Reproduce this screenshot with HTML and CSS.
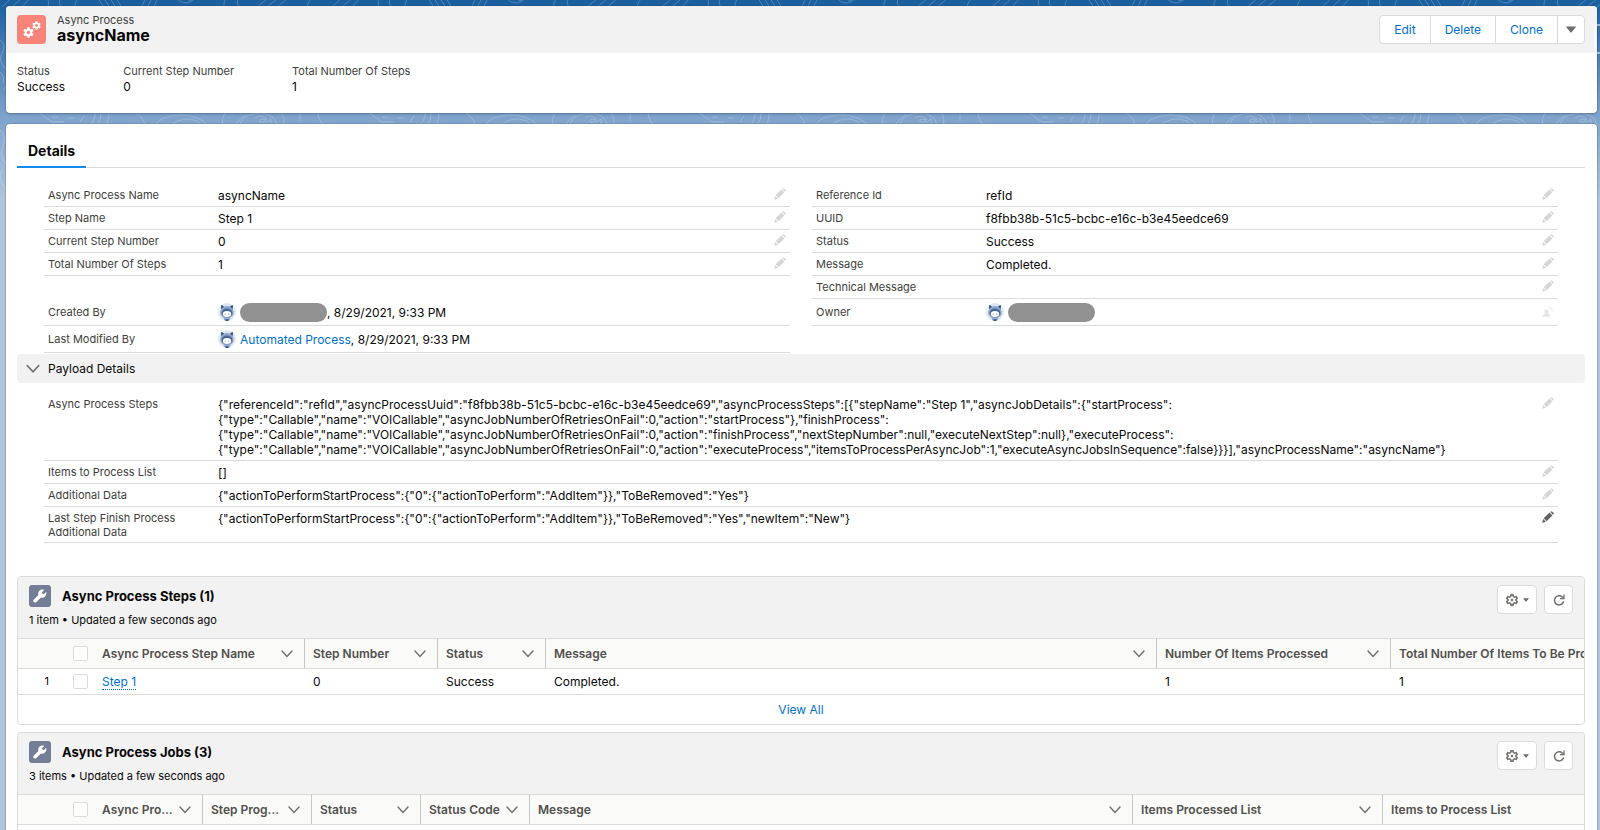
FILE: index.html
```
<!DOCTYPE html>
<html lang="en">
<head>
    <meta charset="UTF-8">
    <meta name="viewport" content="width=device-width, initial-scale=1.0">
    <title>asyncName | Async Process</title>
    <link rel="stylesheet" href="styles.css">
</head>
<body>
    <!-- shared icons -->
    <svg class="sprite" aria-hidden="true">
        <symbol id="pencil" viewBox="0 0 12 12">
            <path d="M1.700 7.300 7.500 1.600l2.900 2.900-5.800 5.700zM8.300 1l.6-.6a.9.9 0 0 1 1.200 0l1.500 1.500a.9.9 0 0 1 0 1.200l-.6.6zM1.200 8.100l2.700 2.700-3 1c-.5.1-.7-.1-.6-.6z"/>
        </symbol>
        <symbol id="chevron" viewBox="0 0 12 12">
            <path d="M1 3l5 5.400L11 3" fill="none" stroke="currentColor" stroke-width="1.400" stroke-linecap="round"/>
        </symbol>
        <symbol id="down" viewBox="0 0 10 7">
            <path d="M.6.5h8.800c.5 0 .6.4.3.8L5.600 6.200c-.3.4-.9.4-1.200 0L.3 1.300C0 .9.1.5.6.5z"/>
        </symbol>
        <symbol id="cog" viewBox="-12 -12 24 24">
            <circle r="6" fill="none" stroke="currentColor" stroke-width="4.500"/>
            <path d="M0-11.500V-7M0 11.500V7M-10-5.800-6-3.500M10 5.800 6 3.500M-10 5.800-6 3.500M10-5.800 6-3.500" stroke="currentColor" stroke-width="5.500" stroke-linejoin="round"/>
        </symbol>
        <symbol id="settings" viewBox="-12 -12 24 24">
            <path d="M-2-10.500h4l.7 3.700 2.300 1.300 3.500-1.300 2 3.500L7.700-.9V.9l2.800 2.400-2 3.500L5 5.500 2.700 6.800 2 10.500h-4l-.7-3.700L-5 5.500l-3.500 1.300-2-3.500L-7.700.9V-.9l-2.800-2.400 2-3.500L-5-5.500l2.300-1.300z" fill="none" stroke="currentColor" stroke-width="3"/>
            <circle r="2.600"/>
        </symbol>
        <symbol id="refresh" viewBox="0 0 12 12">
            <path d="M9.300 3A4.600 4.600 0 1 0 10.400 8" fill="none" stroke="currentColor" stroke-width="1.500" stroke-linecap="round"/>
            <path d="M11.600.4v4.800H6.900V4.100h2.200L10.300 3V.4z"/>
        </symbol>
        <symbol id="wrench" viewBox="0 0 14 14">
            <path d="M13.300 3.300c-.1-.3-.3-.3-.5-.1l-1.900 1.900c-.3.2-.6.2-.8 0L9 4c-.2-.2-.2-.6 0-.8l1.900-1.900c.2-.2.1-.4-.1-.5C9 .2 7 .8 5.900 2.400c-.8 1.100-.9 2.300-.5 3.500L.9 10.400a1.700 1.700 0 0 0 0 2.500 1.700 1.700 0 0 0 2.500 0l4.500-4.500c1.200.4 2.500.3 3.600-.5 1.600-1.100 2.200-3 1.800-4.600z"/>
        </symbol>
        <symbol id="avatar" viewBox="0 0 18 18">
            <circle cx="9" cy="9" r="9" fill="#e1e8f2"/>
            <path d="M3.200 2l3 1.500a7 7 0 0 1 5.600 0l3-1.500v4.200c1.200 2 1.300 5-.2 6.800L12 15H6l-2.600-2c-1.500-1.800-1.400-4.800-.2-6.800z" fill="#8fa6cc"/>
            <path d="M3.200 2l2.600 1.300L4 5.500H3.200zM14.800 2l-2.600 1.300L14 5.500h.8z" fill="#2f4f86"/>
            <ellipse cx="9" cy="9.800" rx="5.400" ry="4.400" fill="#4a6796"/>
            <ellipse cx="9" cy="11" rx="4.200" ry="3" fill="#fff"/>
            <circle cx="7.200" cy="11" r=".6" fill="#5b769f"/>
            <circle cx="10.800" cy="11" r=".6" fill="#5b769f"/>
            <path d="M5.500 15.200h7L11 17.700a9 9 0 0 1-4 0z" fill="#7f9ccb"/>
            <path d="M7.500 16.200h3l-.5 1.700H8z" fill="#2f4f86"/>
        </symbol>
        <symbol id="owner" viewBox="0 0 12 12">
            <path d="M4.500 3.500a2 2 0 0 1 2 2.200c0 1-.5 1.400-.5 1.900 0 .7 2.200.8 2.200 2.200 0 .6-.3.900-.8.900H1.400c-.5 0-.8-.3-.8-.9C.6 8.400 3 8.300 3 7.600c0-.5-.5-.9-.5-1.900a2 2 0 0 1 2-2.200z"/>
            <path d="M6.500 1.500c2.200-.3 3.800 1 3.700 3.500" fill="none" stroke="currentColor"/>
        </symbol>
    </svg>

    <!-- topographic backdrop -->
    <svg class="backdrop" aria-hidden="true">
        <defs>
            <pattern id="topo" width="330" height="200" patternUnits="userSpaceOnUse">
                <g fill="none" stroke="#fff" stroke-opacity=".22">
                    <path d="M2 7 12-2M12 7 22-2M22 7 30-2M48-2q1 5 0 10M60-2q-2 5 1 10M78-2q-4 5-3 10M98-2l6 10M104-2l6 10M110-2l6 10M116-2l6 10M146-2l-5 10M152-2l-5 10M158-2l-5 10M176-2q10 10 20 0M186-2q4 5 8 0M226-2q-3 5-2 10M238-2q-2 5 1 10M268-2l-12 10M278-2l-12 10M288-2l-12 10M312-2q-8 8-2 10"/>
                    <path d="M38 112l14 10h12M52 117h6M68 118h6M84 116l-4 6M95 112q1 6-5 14M101 112q1 6-4 14M109 112q1 6-3 14M132 111q12 5 13 15M155 126q4-10 25-11 20 0 28 11M170 126q12-11 27-5l4 5M226 112q-5 6-3 14M246 115q-8 4-11 12M255 118q5-4 10 0c5 4-6-1-5 3s4-2 7 1l4-3v6l-8-1M240 124q3-10 20-11 14 0 17 12M280 111q6 8 3 14M300 113v8M318 113q1 9 7 13"/>
                    <path d="M0 40q7 5 2 13t5 17-4 20M0 72q5 5 3 11M0 130q7 6 3 16t3 18M2 170q-5 9 3 18"/>
                </g>
            </pattern>
        </defs>
        <rect width="100%" height="100%" fill="url(#topo)"/>
    </svg>
    <span class="edge-tab"></span>

    <header class="card highlights">
        <div class="highlights-top">
            <span class="entity-icon">
                <svg width="11" height="11"><use href="#cog"/></svg>
                <svg width="9" height="9"><use href="#cog"/></svg>
            </span>
            <div class="title">
                <p class="entity">Async Process</p>
                <h1>asyncName</h1>
            </div>
            <div class="button-group">
                <button type="button">Edit</button>
                <button type="button">Delete</button>
                <button type="button">Clone</button>
                <button type="button" class="more" aria-label="More actions"><svg width="10" height="7"><use href="#down"/></svg></button>
            </div>
        </div>
        <dl class="summary">
            <div><dt>Status</dt><dd>Success</dd></div>
            <div><dt>Current Step Number</dt><dd>0</dd></div>
            <div><dt>Total Number Of Steps</dt><dd>1</dd></div>
        </dl>
    </header>

    <main class="card record">
        <nav class="tabs"><a href="#details">Details</a></nav>

        <section id="details" class="details">
            <dl class="fields">
                <div class="field"><dt>Async Process Name</dt><dd>asyncName</dd><button type="button" class="edit" aria-label="Edit Async Process Name"><svg><use href="#pencil"/></svg></button></div>
                <div class="field"><dt>Step Name</dt><dd>Step 1</dd><button type="button" class="edit" aria-label="Edit Step Name"><svg><use href="#pencil"/></svg></button></div>
                <div class="field"><dt>Current Step Number</dt><dd>0</dd><button type="button" class="edit" aria-label="Edit Current Step Number"><svg><use href="#pencil"/></svg></button></div>
                <div class="field"><dt>Total Number Of Steps</dt><dd>1</dd><button type="button" class="edit" aria-label="Edit Total Number Of Steps"><svg><use href="#pencil"/></svg></button></div>
                <div class="field blank"></div>
                <div class="field person"><dt>Created By</dt><dd><svg class="avatar"><use href="#avatar"/></svg><span class="redacted"></span>, 8/29/2021, 9:33 PM</dd></div>
                <div class="field person"><dt>Last Modified By</dt><dd><svg class="avatar"><use href="#avatar"/></svg><a href="#">Automated Process</a>, 8/29/2021, 9:33 PM</dd></div>
            </dl>
            <dl class="fields">
                <div class="field"><dt>Reference Id</dt><dd>refId</dd><button type="button" class="edit" aria-label="Edit Reference Id"><svg><use href="#pencil"/></svg></button></div>
                <div class="field"><dt>UUID</dt><dd>f8fbb38b-51c5-bcbc-e16c-b3e45eedce69</dd><button type="button" class="edit" aria-label="Edit UUID"><svg><use href="#pencil"/></svg></button></div>
                <div class="field"><dt>Status</dt><dd>Success</dd><button type="button" class="edit" aria-label="Edit Status"><svg><use href="#pencil"/></svg></button></div>
                <div class="field"><dt>Message</dt><dd>Completed.</dd><button type="button" class="edit" aria-label="Edit Message"><svg><use href="#pencil"/></svg></button></div>
                <div class="field"><dt>Technical Message</dt><dd></dd><button type="button" class="edit" aria-label="Edit Technical Message"><svg><use href="#pencil"/></svg></button></div>
                <div class="field person"><dt>Owner</dt><dd><svg class="avatar"><use href="#avatar"/></svg><span class="redacted"></span></dd><button type="button" class="edit owner" aria-label="Change Owner"><svg><use href="#owner"/></svg></button></div>
            </dl>
        </section>

        <button type="button" class="section-title"><svg width="14" height="14"><use href="#chevron"/></svg>Payload Details</button>

        <dl class="fields payload">
            <div class="field"><dt>Async Process Steps</dt><dd>{"referenceId":"refId","asyncProcessUuid":"f8fbb38b-51c5-bcbc-e16c-b3e45eedce69","asyncProcessSteps":[{"stepName":"Step 1","asyncJobDetails":{"startProcess":<br>{"type":"Callable","name":"VOICallable","asyncJobNumberOfRetriesOnFail":0,"action":"startProcess"},"finishProcess":<br>{"type":"Callable","name":"VOICallable","asyncJobNumberOfRetriesOnFail":0,"action":"finishProcess","nextStepNumber":null,"executeNextStep":null},"executeProcess":<br>{"type":"Callable","name":"VOICallable","asyncJobNumberOfRetriesOnFail":0,"action":"executeProcess","itemsToProcessPerAsyncJob":1,"executeAsyncJobsInSequence":false}}}],"asyncProcessName":"asyncName"}</dd><button type="button" class="edit" aria-label="Edit Async Process Steps"><svg><use href="#pencil"/></svg></button></div>
            <div class="field"><dt>Items to Process List</dt><dd>[]</dd><button type="button" class="edit" aria-label="Edit Items to Process List"><svg><use href="#pencil"/></svg></button></div>
            <div class="field"><dt>Additional Data</dt><dd>{"actionToPerformStartProcess":{"0":{"actionToPerform":"AddItem"}},"ToBeRemoved":"Yes"}</dd><button type="button" class="edit" aria-label="Edit Additional Data"><svg><use href="#pencil"/></svg></button></div>
            <div class="field"><dt>Last Step Finish Process Additional Data</dt><dd>{"actionToPerformStartProcess":{"0":{"actionToPerform":"AddItem"}},"ToBeRemoved":"Yes","newItem":"New"}</dd><button type="button" class="edit active" aria-label="Edit Last Step Finish Process Additional Data"><svg><use href="#pencil"/></svg></button></div>
        </dl>

        <section class="related">
            <div class="related-head">
                <div>
                    <h2><span class="list-icon"><svg width="14" height="14"><use href="#wrench"/></svg></span>Async Process Steps (1)</h2>
                    <p>1 item • Updated a few seconds ago</p>
                </div>
                <div class="list-actions">
                    <button type="button" class="settings" aria-label="List settings"><svg width="12" height="12"><use href="#settings"/></svg><svg width="6" height="4"><use href="#down"/></svg></button>
                    <button type="button" aria-label="Refresh"><svg width="12" height="12"><use href="#refresh"/></svg></button>
                </div>
            </div>
            <div class="table-wrap">
                <table class="steps">
                    <colgroup><col class="c-num"><col class="c-check"><col class="c-name"><col class="c-step"><col class="c-status"><col><col class="c-items"><col class="c-total"></colgroup>
                    <thead>
                        <tr>
                            <th></th>
                            <th class="check"><input type="checkbox" aria-label="Select all steps"></th>
                            <th><div><span>Async Process Step Name</span><svg><use href="#chevron"/></svg></div></th>
                            <th><div><span>Step Number</span><svg><use href="#chevron"/></svg></div></th>
                            <th><div><span>Status</span><svg><use href="#chevron"/></svg></div></th>
                            <th><div><span>Message</span><svg><use href="#chevron"/></svg></div></th>
                            <th><div><span>Number Of Items Processed</span><svg><use href="#chevron"/></svg></div></th>
                            <th><div><span>Total Number Of Items To Be Processed</span><svg><use href="#chevron"/></svg></div></th>
                        </tr>
                    </thead>
                    <tbody>
                        <tr>
                            <td class="num">1</td>
                            <td class="check"><input type="checkbox" aria-label="Select Step 1"></td>
                            <td><a href="#" class="row-link">Step 1</a></td>
                            <td>0</td>
                            <td>Success</td>
                            <td>Completed.</td>
                            <td>1</td>
                            <td>1</td>
                        </tr>
                    </tbody>
                </table>
            </div>
            <div class="view-all"><a href="#">View All</a></div>
        </section>

        <section class="related last">
            <div class="related-head">
                <div>
                    <h2><span class="list-icon"><svg width="14" height="14"><use href="#wrench"/></svg></span>Async Process Jobs (3)</h2>
                    <p>3 items • Updated a few seconds ago</p>
                </div>
                <div class="list-actions">
                    <button type="button" class="settings" aria-label="List settings"><svg width="12" height="12"><use href="#settings"/></svg><svg width="6" height="4"><use href="#down"/></svg></button>
                    <button type="button" aria-label="Refresh"><svg width="12" height="12"><use href="#refresh"/></svg></button>
                </div>
            </div>
            <div class="table-wrap">
                <table class="jobs">
                    <colgroup><col class="c-num"><col class="c-check"><col class="c-job"><col class="c-job"><col class="c-job"><col class="c-job"><col><col class="c-processed"><col class="c-list"></colgroup>
                    <thead>
                        <tr>
                            <th></th>
                            <th class="check"><input type="checkbox" aria-label="Select all jobs"></th>
                            <th><div><span>Async Pro...</span><svg><use href="#chevron"/></svg></div></th>
                            <th><div><span>Step Prog...</span><svg><use href="#chevron"/></svg></div></th>
                            <th><div><span>Status</span><svg><use href="#chevron"/></svg></div></th>
                            <th><div><span>Status Code</span><svg><use href="#chevron"/></svg></div></th>
                            <th><div><span>Message</span><svg><use href="#chevron"/></svg></div></th>
                            <th><div><span>Items Processed List</span><svg><use href="#chevron"/></svg></div></th>
                            <th><div><span>Items to Process List</span><svg><use href="#chevron"/></svg></div></th>
                        </tr>
                    </thead>
                </table>
            </div>
        </section>
    </main>
</body>
</html>
```
FILE: styles.css
```
* {
    box-sizing: border-box;
}

body {
    position: relative;
    display: flex;
    flex-direction: column;
    gap: 11px;
    min-height: 100vh;
    margin: 0;
    padding: 6px 3px 0 6px;
    font-family: Inter, "Liberation Sans", sans-serif;
    font-size: 12px;
    line-height: 15px;
    color: #080707;
    background: #b0c4df linear-gradient(#195e9f, #7fa3cc 118px, #b0c4df 200px) no-repeat;
    overflow-x: hidden;
}

h1, h2, p, dl, dd {
    margin: 0;
}

a {
    color: #0070d2;
    text-decoration: none;
}

button {
    padding: 0;
    border: 0;
    background: none;
    font-family: inherit;
    font-size: 12px;
    color: #0070d2;
    cursor: pointer;
}

svg {
    flex: none;
    fill: currentColor;
}

.sprite {
    position: absolute;
    width: 0;
    height: 0;
}

.backdrop {
    position: absolute;
    top: 0;
    left: 0;
    width: 100%;
    height: 200px;
}

.edge-tab {
    position: absolute;
    top: 24px;
    right: -10px;
    width: 16px;
    height: 30px;
    border: 2px solid rgba(255, 255, 255, 0.5);
    border-radius: 4px;
    z-index: 1;
}

.card {
    position: relative;
    background: #fff;
    border-radius: 4px;
    box-shadow: 0 0 0 1px rgba(0, 0, 0, 0.12), 0 2px 2px rgba(0, 0, 0, 0.1);
}

/* Highlights panel */
.highlights-top {
    display: flex;
    align-items: center;
    gap: 11px;
    height: 47px;
    padding: 0 12px 0 11px;
    background: #f2f2f2;
    border-radius: 4px 4px 0 0;
}

.entity-icon {
    display: flex;
    align-items: flex-end;
    justify-content: center;
    width: 29px;
    height: 29px;
    padding-bottom: 6px;
    border-radius: 4px;
    background: #f88379;
    color: #fff;
}

.entity-icon svg + svg {
    align-self: flex-start;
    margin-top: 6px;
    margin-left: -2px;
}

.title {
    flex: 1;
    padding-bottom: 2px;
}

.entity {
    font-size: 11px;
    line-height: 13px;
    color: #3e3e3c;
}

h1 {
    font-size: 16px;
    font-weight: 700;
    line-height: 16px;
}

.button-group {
    display: flex;
    height: 29px;
    border: 1px solid #dddbda;
    border-radius: 4px;
    background: #fff;
}

.button-group button {
    padding: 0 14px;
}

.button-group button + button {
    border-left: 1px solid #dddbda;
}

.button-group .more {
    display: flex;
    align-items: center;
    padding: 0 8px;
    color: #706e6b;
}

.summary {
    display: flex;
    gap: 58px;
    padding: 11px 11px 19px;
}

.summary dt {
    margin-bottom: 1px;
}

dt {
    font-size: 11px;
    line-height: 14px;
    color: #3e3e3c;
}

/* Record body */
.record {
    flex: 1;
    display: flex;
    flex-direction: column;
    padding: 0 12px 0 11px;
    border-radius: 4px 4px 0 0;
}

.tabs {
    display: flex;
    margin-bottom: 15px;
    border-bottom: 1px solid #dddbda;
}

.tabs a {
    padding: 19px 11px 8px;
    margin-bottom: -1px;
    border-bottom: 2px solid #1589ee;
    font-size: 14px;
    font-weight: 700;
    color: #080707;
}

.details {
    display: grid;
    grid-template-columns: 1fr 1fr;
    gap: 22px;
    padding: 0 27px;
}

.field {
    display: flex;
    min-height: 23px;
    padding: 4px;
    padding-bottom: 3px;
    border-bottom: 1px solid #dddbda;
}

.details .field:first-child {
    min-height: 24px;
    padding-top: 5px;
}

.field dt {
    flex: none;
    width: 138px;
    margin-right: 32px;
    line-height: 15px;
}

.field dd {
    flex: 1;
    min-width: 0;
    overflow-wrap: anywhere;
}

.field.blank {
    border-bottom-color: transparent;
}

.field.person {
    align-items: center;
    min-height: 27px;
    padding-top: 0;
    padding-bottom: 0;
}

.person dd {
    display: flex;
    align-items: center;
}

.avatar {
    width: 18px;
    height: 18px;
    margin-right: 4px;
}

.redacted {
    width: 87px;
    height: 19px;
    border-radius: 10px;
    background: #919191;
}

.edit {
    height: 12px;
    color: #d8d6d5;
}

.edit.active {
    color: #666462;
}

.edit.owner {
    color: #e8e6e5;
}

.edit svg {
    display: block;
    width: 12px;
    height: 12px;
}

.section-title {
    display: flex;
    align-items: center;
    gap: 8px;
    width: 100%;
    height: 29px;
    margin: 1px 0 10px;
    padding: 0 9px;
    border-radius: 4px;
    background: #f2f2f2;
    color: #080707;
}

.section-title svg {
    color: #706e6b;
}

.payload {
    margin: 0 27px 33px;
}

.payload .field dt {
    line-height: 14px;
}

/* Related lists */
.related {
    margin-bottom: 7px;
    border: 1px solid #dddbda;
    border-radius: 4px;
    background: #fff;
    overflow: hidden;
}

.related.last {
    flex: 1;
    margin-bottom: 0;
    border-bottom: 0;
    border-radius: 4px 4px 0 0;
}

.related-head {
    display: flex;
    justify-content: space-between;
    height: 61px;
    padding: 8px 11px 0;
    background: #f2f2f2;
}

h2 {
    display: flex;
    align-items: center;
    gap: 11px;
    font-size: 13px;
    font-weight: 700;
}

.list-icon {
    display: flex;
    align-items: center;
    justify-content: center;
    width: 22px;
    height: 22px;
    border-radius: 3px;
    background: #747e96;
    color: #fff;
}

.related-head p {
    margin-top: 6px;
    font-size: 11px;
}

.list-actions {
    display: flex;
    gap: 7px;
}

.list-actions button {
    display: flex;
    align-items: center;
    justify-content: center;
    width: 29px;
    height: 29px;
    border: 1px solid #dddbda;
    border-radius: 4px;
    background: #fff;
    color: #706e6b;
}

.list-actions .settings {
    gap: 5px;
    width: 40px;
}

.table-wrap {
    overflow: hidden;
}

table {
    width: calc(100% + 88px);
    table-layout: fixed;
    border-collapse: separate;
    border-spacing: 0;
}

.c-num { width: 48px; }
.c-check { width: 28px; }
.c-name { width: 211px; }
.c-step { width: 133px; }
.c-status { width: 108px; }
.c-items { width: 234px; }
.c-total { width: 281px; }
.c-job { width: 109px; }
.c-processed { width: 250px; }
.c-list { width: 289px; }

th {
    height: 31px;
    padding: 0 11px 0 8px;
    border-top: 1px solid #dddbda;
    border-right: 1px solid #c9c7c5;
    border-bottom: 1px solid #dddbda;
    background: #fafaf9;
    font-size: 12px;
    font-weight: 600;
    text-align: left;
    white-space: nowrap;
    color: #514f4d;
}

th:first-child, th.check {
    border-right: 0;
}

th div {
    display: flex;
    align-items: center;
    justify-content: space-between;
}

th svg {
    width: 12px;
    height: 12px;
    color: #706e6b;
}

td {
    height: 26px;
    padding: 0 8px;
    border-bottom: 1px solid #dddbda;
}

td.num {
    padding-right: 17px;
    text-align: right;
    font-size: 11px;
}

th.check, td.check {
    padding: 0;
    text-align: center;
}

input[type="checkbox"] {
    appearance: none;
    display: block;
    width: 15px;
    height: 15px;
    margin: 0 auto;
    border: 1px solid #dddbda;
    border-radius: 2px;
    background: #fff;
}

.row-link {
    border-bottom: 1px dotted #0070d2;
}

.view-all {
    padding: 7px;
    text-align: center;
}
```
